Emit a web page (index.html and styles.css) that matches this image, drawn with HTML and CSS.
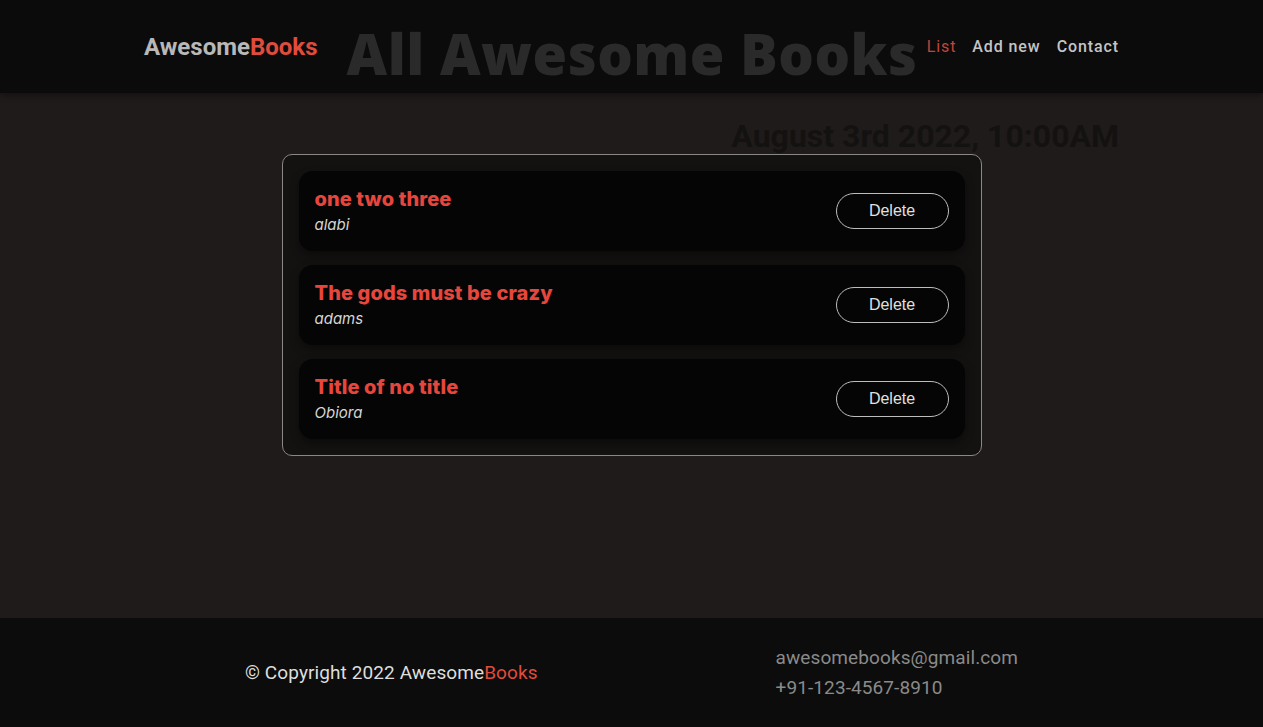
FILE: index.html
```html
<!DOCTYPE html>
<html lang="en">
<head>
<meta charset="utf-8">
<title>Awesome Books</title>
<link rel="stylesheet" href="styles.css">
</head>
<body>
<header class="site-header">
  <div class="header-inner">
    <a class="logo" href="#">Awesome<span class="accent">Books</span></a>
    <h1 class="page-title">All Awesome Books</h1>
    <nav class="nav">
      <a class="nav-link active" href="#">List</a>
      <a class="nav-link" href="#">Add new</a>
      <a class="nav-link" href="#">Contact</a>
    </nav>
  </div>
</header>
<main class="main">
  <div class="date-row">
    <p class="date">August 3rd 2022, 10:00AM</p>
  </div>
  <section class="book-list">
    <article class="book">
      <div class="book-info">
        <h2 class="book-title">one two three</h2>
        <p class="book-author">alabi</p>
      </div>
      <button class="delete-btn" type="button">Delete</button>
    </article>
    <article class="book">
      <div class="book-info">
        <h2 class="book-title">The gods must be crazy</h2>
        <p class="book-author">adams</p>
      </div>
      <button class="delete-btn" type="button">Delete</button>
    </article>
    <article class="book">
      <div class="book-info">
        <h2 class="book-title">Title of no title</h2>
        <p class="book-author">Obiora</p>
      </div>
      <button class="delete-btn" type="button">Delete</button>
    </article>
  </section>
</main>
<footer class="site-footer">
  <div class="footer-inner">
    <p class="copyright">© Copyright 2022 Awesome<span class="accent">Books</span></p>
    <div class="contact">
      <p class="contact-line">awesomebooks@gmail.com</p>
      <p class="contact-line">+91-123-4567-8910</p>
    </div>
  </div>
</footer>
</body>
</html>
```
FILE: styles.css
```css
* {
  box-sizing: border-box;
}

html, body {
  margin: 0;
  padding: 0;
}

body {
  background: #1f1b1a;
  font-family: Roboto, "Liberation Sans", sans-serif;
  min-height: 727px;
  display: flex;
  flex-direction: column;
}

.accent {
  color: #e04b3c;
}

.site-header {
  background: #0c0b0c;
  height: 93px;
  box-shadow: 0 3px 6px rgba(0, 0, 0, 0.35);
  position: relative;
  z-index: 1;
}

.header-inner {
  max-width: 975px;
  margin: 0 auto;
  height: 100%;
  display: flex;
  align-items: center;
}

.logo {
  font-size: 24px;
  font-weight: 700;
  color: #b8b8b8;
  text-decoration: none;
}

.page-title {
  margin: 14px 0 0 29px;
  font-family: "Open Sans", Roboto, sans-serif;
  font-size: 56px;
  font-weight: 800;
  line-height: 1.2;
  color: #2a2a2a;
  letter-spacing: 0.5px;
  white-space: nowrap;
}

.nav {
  margin-left: auto;
  display: flex;
  gap: 16px;
}

.nav-link {
  font-size: 16px;
  font-weight: 500;
  color: #c4c4c4;
  text-decoration: none;
  letter-spacing: 0.9px;
}

.nav-link.active {
  color: #c0453a;
  font-weight: 400;
}

.main {
  flex: 1;
  padding-top: 25px;
}

.date-row {
  max-width: 975px;
  margin: 0 auto;
  text-align: right;
}

.date {
  margin: 0;
  font-size: 32px;
  font-weight: 700;
  line-height: 36px;
  color: #141211;
}

.book-list {
  width: 700px;
  margin: 0 auto;
  background: #141211;
  border: 1px solid #8a8785;
  border-radius: 10px;
  padding: 16px;
  display: flex;
  flex-direction: column;
  gap: 14px;
}

.book {
  background: #050505;
  border-radius: 14px;
  padding: 16px;
  display: flex;
  align-items: center;
  justify-content: space-between;
  box-shadow: 0 4px 10px rgba(0, 0, 0, 0.45);
}

.book-title {
  margin: 0;
  font-family: Inter, "Noto Sans", sans-serif;
  font-size: 20px;
  font-weight: 800;
  line-height: 24px;
  color: #e8453c;
  letter-spacing: 0.1px;
}

.book-author {
  margin: 4px 0 0;
  font-family: Inter, "Noto Sans", sans-serif;
  font-style: italic;
  font-size: 15px;
  line-height: 20px;
  color: #d6d6d6;
}

.delete-btn {
  width: 113px;
  height: 36px;
  border: 1px solid #bdbdbd;
  border-radius: 18px;
  background: transparent;
  color: #e0e0e0;
  font-family: "Liberation Sans", Arial, sans-serif;
  font-size: 16px;
  cursor: pointer;
}

.site-footer {
  background: #0c0c0c;
  height: 109px;
  display: flex;
  align-items: center;
}

.footer-inner {
  width: 773px;
  margin: 0 auto;
  display: flex;
  justify-content: space-between;
  align-items: center;
}

.copyright {
  margin: 0;
  font-size: 19px;
  color: #dedede;
  letter-spacing: 0.1px;
}

.contact {
  display: flex;
  flex-direction: column;
  gap: 8px;
}

.contact-line {
  margin: 0;
  font-size: 19px;
  line-height: 22px;
  color: #8a8a8a;
  letter-spacing: 0.1px;
}
```
